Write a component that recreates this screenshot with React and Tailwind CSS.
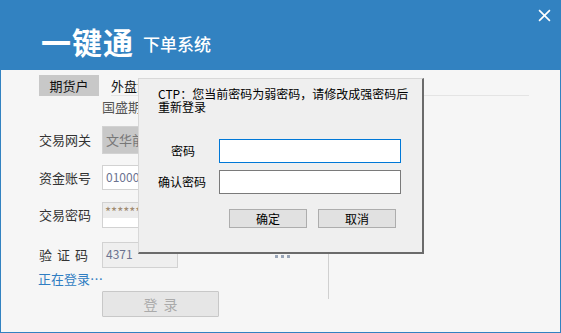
export default function App() {
  return (
    <div
      className="relative w-[561px] h-[333px] overflow-hidden bg-[#f6f6f6]"
      style={{ fontFamily: '"Noto Sans CJK SC", "Liberation Sans", sans-serif' }}
    >
      {/* title bar */}
      <header className="h-[70px] bg-[#3282c1] flex items-start pl-[41px] pr-[9px] pt-[24px]">
        <span className="text-[30px] leading-[34px] font-bold text-white tracking-[1px]">一键通</span>
        <span className="ml-[9px] mt-[9px] text-[17px] leading-[22px] text-white font-medium">下单系统</span>
        <button className="ml-auto -mt-[16px] w-[14px] h-[14px] text-white">
          <svg viewBox="0 0 12 12" className="w-[13px] h-[13px]">
            <path d="M1 1 L11 11 M11 1 L1 11" stroke="white" strokeWidth="1.5" fill="none" />
          </svg>
        </button>
      </header>

      <div className="h-[263px] border-x border-b border-[#3282c1] relative">
        {/* tabs */}
        <div className="flex items-end pl-[38px] pt-[5px] h-[26px]">
          <div className="w-[60px] h-[21px] bg-[#c8c8c8] text-[13px] leading-[21px] text-center text-[#111]">期货户</div>
          <div className="ml-[12px] h-[21px] text-[13px] leading-[21px] text-[#111] border-b border-[#e4e4e4] w-[418px]">外盘港股</div>
        </div>

        <div className="pl-[38px] text-[13px]">
          <div className="ml-[63px] mt-[3px] h-[16px] leading-[16px] text-[#555]">国盛期货</div>

          <div className="flex items-center mt-[11px]">
            <span className="w-[63px] text-[#333]">交易网关</span>
            <div className="w-[180px] h-[28px] bg-[#c8c8c8] border border-[#d2d2d2] px-[3px] leading-[26px] text-[#777]">文华前置</div>
          </div>

          <div className="flex items-center mt-[11px]">
            <span className="w-[63px] text-[#333]">资金账号</span>
            <div className="w-[180px] h-[25px] bg-white border border-[#d2d2d2] px-[3px] leading-[22px] text-[12px] text-[#6b7290]">0100021</div>
          </div>

          <div className="flex items-center mt-[12px]">
            <span className="w-[63px] text-[#333]">交易密码</span>
            <div className="w-[180px] h-[26px] bg-white border border-[#d2d2d2]">
              <div className="h-[15px] bg-[#ececec] px-[2px] text-[13px] leading-[17px] text-[#a08a70]">******</div>
            </div>
          </div>

          <div className="flex items-center mt-[14px]">
            <span className="w-[63px] text-[#333] tracking-[5px]">验证码</span>
            <div className="w-[76px] h-[26px] bg-[#efefef] border border-[#d2d2d2] px-[3px] leading-[22px] text-[12px] text-[#6b7290]">4371</div>
            <div className="ml-[97px] self-start mt-[13px] flex gap-[3px]">
              <span className="w-[3px] h-[3px] bg-[#9aa6b8]" />
              <span className="w-[3px] h-[3px] bg-[#9aa6b8]" />
              <span className="w-[3px] h-[3px] bg-[#9aa6b8]" />
            </div>
          </div>

          <div className="-ml-[1px] mt-[2px] h-[18px] leading-[18px] text-[#2f7dc2]">正在登录…</div>

          <div className="flex">
            <button className="ml-[63px] mt-[3px] w-[117px] h-[26px] bg-[#e6e6e6] border border-[#c8c8c8] rounded-[1px] text-[#aaa] text-[14px] tracking-[6px] pl-[6px]">登录</button>
            <div className="ml-[109px] -mt-[38px] w-[1px] h-[49px] bg-[#d0d0d0]" />
          </div>
        </div>

        {/* weak password dialog */}
        <div className="absolute left-[137px] top-[8px] w-[286px] h-[176px] bg-[#efefef] border-l border-t border-[#d8d8d8] border-r-2 border-b-2 border-r-[#6b6b6b] border-b-[#6b6b6b] text-[12px] text-black">
          <p className="pl-[19px] pr-[10px] pt-[8px] leading-[13px]">
            CTP：您当前密码为弱密码，请修改成强密码后重新登录
          </p>
          <div className="flex items-center mt-[26px]">
            <span className="w-[80px] pl-[32px]">密码</span>
            <div className="w-[182px] h-[24px] bg-white border border-[#0078d7]" />
          </div>
          <div className="flex items-center mt-[7px]">
            <span className="w-[80px] pl-[19px]">确认密码</span>
            <div className="w-[182px] h-[24px] bg-white border border-[#7a7a7a]" />
          </div>
          <div className="flex gap-[11px] mt-[15px] pl-[90px]">
            <button className="w-[78px] h-[19px] bg-[#e1e1e1] border border-[#adadad] text-[12px] leading-[17px]">确定</button>
            <button className="w-[78px] h-[19px] bg-[#e1e1e1] border border-[#adadad] text-[12px] leading-[17px]">取消</button>
          </div>
        </div>
      </div>
    </div>
  );
}
